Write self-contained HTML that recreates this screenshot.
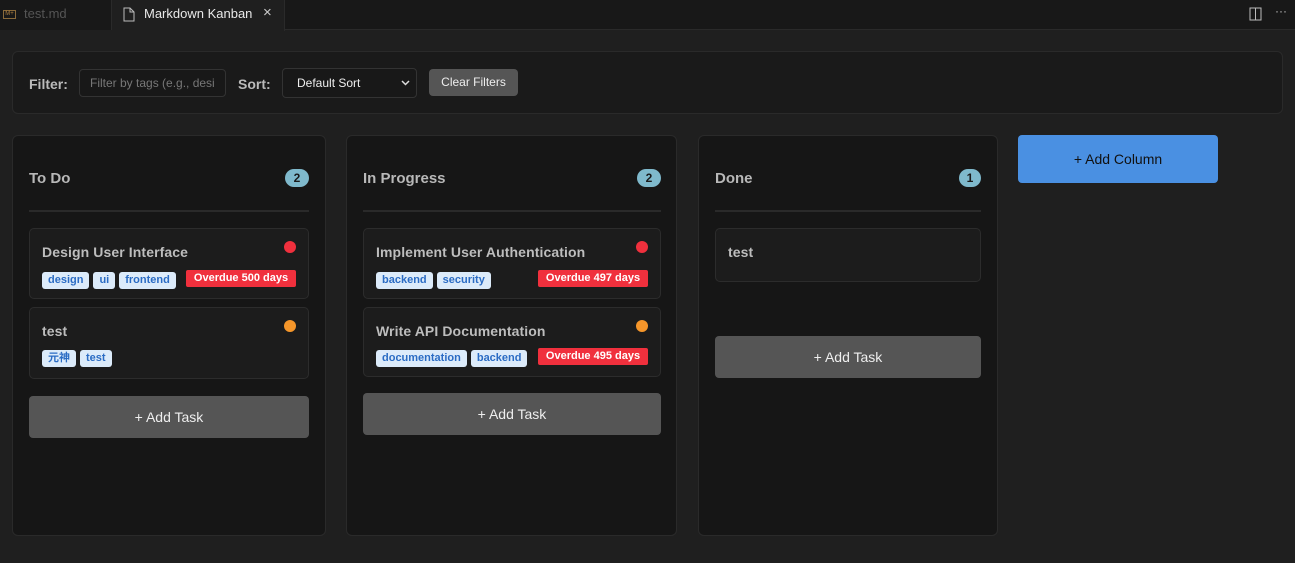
<!DOCTYPE html>
<html><head><meta charset="utf-8"><style>
*{box-sizing:border-box;margin:0;padding:0}
body{width:1295px;height:563px;background:#1f1f1f;font-family:"Liberation Sans","Noto Sans CJK SC",sans-serif;position:relative;overflow:hidden;color:#ccc}
.a{position:absolute}
.tabbar{left:0;top:0;width:1295px;height:30px;background:#181818;border-bottom:1px solid #2a2a2a}
.panel{left:12px;top:51px;width:1271px;height:63px;background:#1a1a1a;border:1px solid #2a2a2a;border-radius:6px}
.col{top:135px;height:401px;background:#161616;border:1px solid #2a2a2a;border-radius:6px}
.title{font-size:15px;font-weight:bold;color:#b8b8b8}
.badge{width:24px;height:18px;border-radius:9px;background:#7fb9cc;color:#1a1a1a;font-size:12px;font-weight:bold;text-align:center;line-height:18px}
.div{height:2px;background:#2a2a2a}
.card{background:#1c1c1c;border:1px solid #2c2c2c;border-radius:5px}
.ct{font-size:14px;color:#bdbdbd;font-weight:bold;letter-spacing:0.1px}
.dot{width:12px;height:12px;border-radius:6px}
.tag{display:inline-block;height:17px;line-height:17px;padding:0 6px;border-radius:3px;background:#dcebfa;color:#2b6cc4;font-size:11px;font-weight:bold;margin-right:4px}
.od{height:17px;line-height:17px;padding:0 6px;border-radius:2px;background:#f0303d;color:#fff;font-size:11px;font-weight:bold;width:110px;text-align:center}
.add{background:#555;border-radius:4px;color:#eee;font-size:14px;text-align:center;line-height:42px}
</style></head><body>
<div class="a tabbar"></div>
<div class="a" style="left:0;top:0;width:112px;height:30px;background:#181818;border-right:1px solid #2a2a2a"></div>
<div class="a" style="left:3px;top:10px;width:13px;height:9px;border:1px solid #8a6a3a;font-size:6px;color:#b08040;line-height:7px;text-align:center">M+</div>
<div class="a" style="left:24px;top:6px;font-size:13px;color:#555">test.md</div>
<div class="a" style="left:112px;top:0;width:173px;height:31px;background:#1f1f1f;border-right:1px solid #2a2a2a"></div>
<svg class="a" style="left:123px;top:7px" width="12" height="15" viewBox="0 0 12 15"><path d="M1 1h6l4 4v9H1z M7 1v4h4" fill="none" stroke="#bbb" stroke-width="1"/></svg>
<div class="a" style="left:144px;top:6px;font-size:13px;color:#e8e8e8">Markdown Kanban</div>
<div class="a" style="left:263px;top:4px;font-size:15px;color:#ccc">×</div>
<svg class="a" style="left:1249px;top:7px" width="14" height="14"><rect x="1" y="1" width="11" height="12" fill="none" stroke="#bbb"/><line x1="6.5" y1="1" x2="6.5" y2="13" stroke="#bbb"/></svg>
<div class="a" style="left:1275px;top:4px;font-size:12px;color:#bbb">···</div>

<div class="a panel"></div>
<div class="a" style="left:29px;top:76px;font-size:14px;font-weight:bold;color:#bbb">Filter:</div>
<div class="a" style="left:79px;top:69px;width:147px;height:28px;border:1px solid #333;border-radius:4px;background:#181818;font-size:12px;color:#777;padding:6px 10px;white-space:nowrap;overflow:hidden">Filter by tags (e.g., desi</div>
<div class="a" style="left:238px;top:76px;font-size:14px;font-weight:bold;color:#bbb">Sort:</div>
<div class="a" style="left:282px;top:68px;width:135px;height:30px;border:1px solid #333;border-radius:4px;background:#181818;font-size:12px;color:#eee;padding:7px 14px">Default Sort<svg style="position:absolute;right:6px;top:11px" width="9" height="6"><path d="M1 1l3.5 3.5L8 1" fill="none" stroke="#ddd" stroke-width="1.5"/></svg></div>
<div class="a" style="left:429px;top:69px;width:89px;height:27px;border-radius:4px;background:#555;font-size:12px;color:#eee;text-align:center;line-height:27px">Clear Filters</div>

<div class="a col" style="left:12px;width:314px"></div>
<div class="a title" style="left:29px;top:170px">To Do</div>
<div class="a badge" style="left:285px;top:169px">2</div>
<div class="a div" style="left:29px;top:210px;width:280px"></div>
<div class="a card" style="left:29px;top:228px;width:280px;height:71px"></div>
<div class="a ct" style="left:42px;top:244px">Design User Interface</div>
<div class="a dot" style="left:284px;top:241px;background:#f0303d"></div>
<div class="a" style="left:42px;top:270px"><span class="tag">design</span><span class="tag">ui</span><span class="tag">frontend</span></div>
<div class="a od" style="left:186px;top:270px">Overdue 500 days</div>
<div class="a card" style="left:29px;top:307px;width:280px;height:72px"></div>
<div class="a ct" style="left:42px;top:323px">test</div>
<div class="a dot" style="left:284px;top:320px;background:#f5962a"></div>
<div class="a" style="left:42px;top:348px"><span class="tag">元神</span><span class="tag">test</span></div>
<div class="a add" style="left:29px;top:396px;width:280px;height:42px">+ Add Task</div>

<div class="a col" style="left:346px;width:331px"></div>
<div class="a title" style="left:363px;top:170px">In Progress</div>
<div class="a badge" style="left:637px;top:169px">2</div>
<div class="a div" style="left:363px;top:210px;width:298px"></div>
<div class="a card" style="left:363px;top:228px;width:298px;height:71px"></div>
<div class="a ct" style="left:376px;top:244px">Implement User Authentication</div>
<div class="a dot" style="left:636px;top:241px;background:#f0303d"></div>
<div class="a" style="left:376px;top:270px"><span class="tag">backend</span><span class="tag">security</span></div>
<div class="a od" style="left:538px;top:270px">Overdue 497 days</div>
<div class="a card" style="left:363px;top:307px;width:298px;height:70px"></div>
<div class="a ct" style="left:376px;top:323px">Write API Documentation</div>
<div class="a dot" style="left:636px;top:320px;background:#f5962a"></div>
<div class="a" style="left:376px;top:348px"><span class="tag">documentation</span><span class="tag">backend</span></div>
<div class="a od" style="left:538px;top:348px">Overdue 495 days</div>
<div class="a add" style="left:363px;top:393px;width:298px;height:42px">+ Add Task</div>

<div class="a col" style="left:698px;width:300px"></div>
<div class="a title" style="left:715px;top:170px">Done</div>
<div class="a badge" style="left:959px;top:169px;width:22px">1</div>
<div class="a div" style="left:715px;top:210px;width:266px"></div>
<div class="a card" style="left:715px;top:228px;width:266px;height:54px"></div>
<div class="a ct" style="left:728px;top:244px">test</div>
<div class="a add" style="left:715px;top:336px;width:266px;height:42px">+ Add Task</div>

<div class="a" style="left:1018px;top:135px;width:200px;height:48px;background:#4a90e2;border-radius:4px;color:#111;font-size:14px;text-align:center;line-height:48px">+ Add Column</div>
</body></html>
